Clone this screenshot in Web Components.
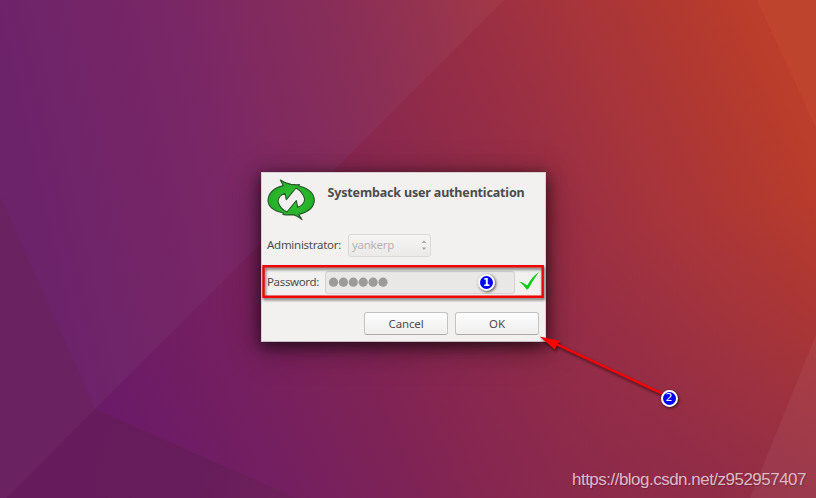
<!DOCTYPE html>
<html lang="en"><head><meta charset="utf-8"><title>Systemback</title>
<style>
html,body{margin:0;width:816px;height:498px;overflow:hidden}
body{font-family:"Noto Sans","Open Sans",sans-serif;color:#4c4c4c}
</style></head><body>
<desk-top>
  <auth-dialog></auth-dialog>
  <mark-layer slot="marks"></mark-layer>
  <fit-text slot="credit" width="234">https://blog.csdn.net/z952957407</fit-text>
</desk-top>
<script>
const define=(name,html,init)=>customElements.define(name,class extends HTMLElement{
  connectedCallback(){
    if(this.shadowRoot)return;
    const t=document.createElement('template');t.innerHTML=html;
    this.attachShadow({mode:'open'}).append(t.content.cloneNode(true));
    if(init)init(this);
  }
});
define('wall-paper',`<style>:host{display:block;width:816px;height:498px}svg{display:block}</style>
<svg width="816" height="498" viewBox="0 0 816 498"><defs>
<linearGradient id="a" gradientUnits="userSpaceOnUse" x1="95" y1="409" x2="792" y2="105"><stop offset="0" stop-color="#6a1a68"/><stop offset=".19" stop-color="#741f60"/><stop offset=".37" stop-color="#812454"/><stop offset=".53" stop-color="#8e2a4b"/><stop offset=".68" stop-color="#9b2f43"/><stop offset=".8" stop-color="#a8353a"/><stop offset=".91" stop-color="#b23930"/><stop offset="1" stop-color="#bb3d2b"/></linearGradient>
<linearGradient id="b" gradientUnits="userSpaceOnUse" x1="20" y1="120" x2="500" y2="10"><stop offset="0" stop-color="#6d236a"/><stop offset=".38" stop-color="#7a2765"/><stop offset=".68" stop-color="#892e58"/><stop offset=".85" stop-color="#95334f"/><stop offset="1" stop-color="#a13847"/></linearGradient>
<linearGradient id="c" gradientUnits="userSpaceOnUse" x1="60" y1="440" x2="290" y2="498"><stop offset="0" stop-color="#661c5c"/><stop offset=".6" stop-color="#671d5b"/><stop offset="1" stop-color="#6f205a"/></linearGradient>
<radialGradient id="d" gradientUnits="userSpaceOnUse" cx="790" cy="580" r="380"><stop offset="0" stop-color="#822850" stop-opacity=".55"/><stop offset=".35" stop-color="#822850" stop-opacity=".42"/><stop offset=".7" stop-color="#822850" stop-opacity=".16"/><stop offset="1" stop-color="#822850" stop-opacity="0"/></radialGradient></defs>
<path fill="url(#a)" d="M0 0H816V498H0z"/><path fill="url(#d)" d="M400 150H816V498H400z"/><path fill="url(#b)" d="M0 0H504L6 498H0z"/>
<path fill="#6b2261" d="M0 196L95 409L6 498H0z"/><path fill="url(#c)" d="M95 409L296 498H6z"/>
<path fill="#ffb060" fill-opacity=".07" d="M757 0H816V128z"/><path fill="#fff" fill-opacity=".05" d="M816 335V498H750z"/></svg>`);
define('desk-top',`<style>:host{display:grid;width:816px;height:498px;overflow:hidden}
wall-paper,main,footer,.m{grid-area:1/1}
main{padding:172px 0 0 261px;z-index:1}
.m{z-index:2}
footer{z-index:1;align-self:end;justify-self:end;padding:0 10px 7px 0;font:17px/23px "Liberation Sans",Arial,sans-serif;color:#dcb9c5;text-shadow:1px 1px 1px #0003}</style>
<wall-paper></wall-paper><main><slot></slot></main><div class="m"><slot name="marks"></slot></div><footer><slot name="credit"></slot></footer>`);
define('sync-logo',`<style>:host{display:block;width:48px;height:42px}svg{display:block}</style>
<svg width="48" height="42" viewBox="801 536 144 126"><defs><radialGradient id="g"><stop offset="0" stop-color="#35c536"/><stop offset="1" stop-color="#24ad27"/></radialGradient></defs>
<path fill-rule="evenodd" fill="url(#g)" stroke="#27572a" stroke-width="3.4" stroke-linejoin="round" d="M841 539Q855 549 873 552Q887 554 898 553L896 557Q943 568 943 601Q940 632 896 642L906 658Q891 645 877 643Q862 645 849 642L850 638Q804 628 804 599Q807 567 850 556Z M888 563Q909 575 914 596Q913 614 893 621L889 601L861 635Q838 624 834 603Q836 585 855 579L859 598Z"/></svg>`);
define('push-button',`<style>:host{display:grid;place-items:center;box-sizing:border-box;width:84px;height:23px;border:1px solid #c3c2c0;border-bottom-color:#aaa9a7;border-radius:3px;background:linear-gradient(#fdfdfd,#efeeed);font-size:11.5px;box-shadow:inset 0 0 2px #fff}</style><slot></slot>`);
define('auth-dialog',`<style>
:host{display:flex;flex-direction:column;box-sizing:border-box;width:285px;height:170px;background:#f2f1ef;border:1px solid #d8cfd2;border-bottom-color:#c9bdc3;box-shadow:0 4px 14px 1px #0009,0 6px 32px 2px #0004;font-size:11.5px;line-height:16px}
header{display:flex;height:60px;box-sizing:border-box;padding:6px 0 0 5px;gap:12.5px}
h1{margin:5px 0 0;font-size:12.5px;line-height:17px;font-weight:700;color:#4b4b4b}
.r{display:flex;align-items:center;padding-left:5px}
.a{height:24px;gap:7px}
.s{display:flex;align-items:center;justify-content:space-between;box-sizing:border-box;width:83px;height:23px;border:1px solid #dad9d7;border-radius:3px;background:linear-gradient(#f5f4f3,#eceae9);padding:0 3px;color:#b5b3b1}
.p{height:24px;margin-top:13px;gap:6px}
.f{display:flex;align-items:center;box-sizing:border-box;width:190px;height:23px;border:1px solid #d4d2d0;border-radius:3px;background:#e9e8e6;padding-left:3px}
.b{display:flex;justify-content:flex-end;gap:7px;margin-top:18px;padding-right:6px}
svg{display:block}
</style>
<header><sync-logo></sync-logo><h1><fit-text width="197">Systemback user authentication</fit-text></h1></header>
<div class="r a"><fit-text width="74">Administrator:</fit-text><div class="s"><fit-text width="42">yankerp</fit-text><svg width="6" height="12" viewBox="0 0 6 12"><path fill="#a7a5a3" d="M.7 4L3 1.5L5.3 4zM.7 8.5H5.3L3 11z"/></svg></div></div>
<div class="r p"><fit-text width="52">Password:</fit-text><div class="f"><svg width="59" height="10" viewBox="0 0 59 10" fill="#9c9b9a"><circle cx="4.5" cy="5.2" r="4.6"/><circle cx="14.4" cy="5.2" r="4.6"/><circle cx="24.3" cy="5.2" r="4.6"/><circle cx="34.2" cy="5.2" r="4.6"/><circle cx="44.1" cy="5.2" r="4.6"/><circle cx="54" cy="5.2" r="4.6"/></svg></div>
<svg width="20" height="20" viewBox="0 0 20 20" style="margin:-2px 0 0 -2px"><path fill="#0ccd12" d="M0 10.5Q4 11 8.3 14.5Q12.5 6 20 1Q14 9 9.2 18L8 18.7Q4.5 13.8 0 10.5z"/></svg></div>
<div class="b"><push-button><fit-text width="35">Cancel</fit-text></push-button><push-button><fit-text width="16">OK</fit-text></push-button></div>`);
define('num-badge',`<style>:host{position:absolute;display:grid;place-items:center;box-sizing:border-box;width:17px;height:17px;border-radius:50%;border:2px solid #fff;background:#0000f5;color:#fff;font:700 10px/12px "DejaVu Sans",sans-serif;box-shadow:1px 1px 3px #000a}</style><slot></slot>`);
// Callout frame, arrow and step numbers drawn over the desktop
define('mark-layer',`<style>:host{display:block;position:relative;width:816px;height:498px}
svg{position:absolute;inset:0;filter:drop-shadow(1px 2px 1.5px #0009)}
num-badge:nth-of-type(1){left:478px;top:274px}num-badge:nth-of-type(2){left:660.5px;top:389.5px;font-weight:400;font-size:11px}</style>
<svg width="816" height="498" viewBox="0 0 816 498"><path fill="none" stroke="#f00505" stroke-width="2.4" d="M263.5 266.3H542.7V296.7H263.5z"/><path stroke="#f00" stroke-width="2.2" d="M555 343.5L663 394"/><path fill="#f00" d="M539.5 336.5L560.5 341L557 344.5L555 349.8z"/></svg>
<num-badge>1</num-badge><num-badge>2</num-badge>`);
// Text spread to a given width by letter spacing; defined last so inherited fonts are in place when it measures
define('fit-text',`<style>:host{display:block;white-space:nowrap}span{display:inline-block}</style><span><slot></slot></span>`,el=>{
  const s=el.shadowRoot.querySelector('span'),n=el.textContent.length;
  const w=s.getBoundingClientRect().width;
  s.style.letterSpacing=((+el.getAttribute('width')-w)/n)+'px';
});
</script></body></html>
